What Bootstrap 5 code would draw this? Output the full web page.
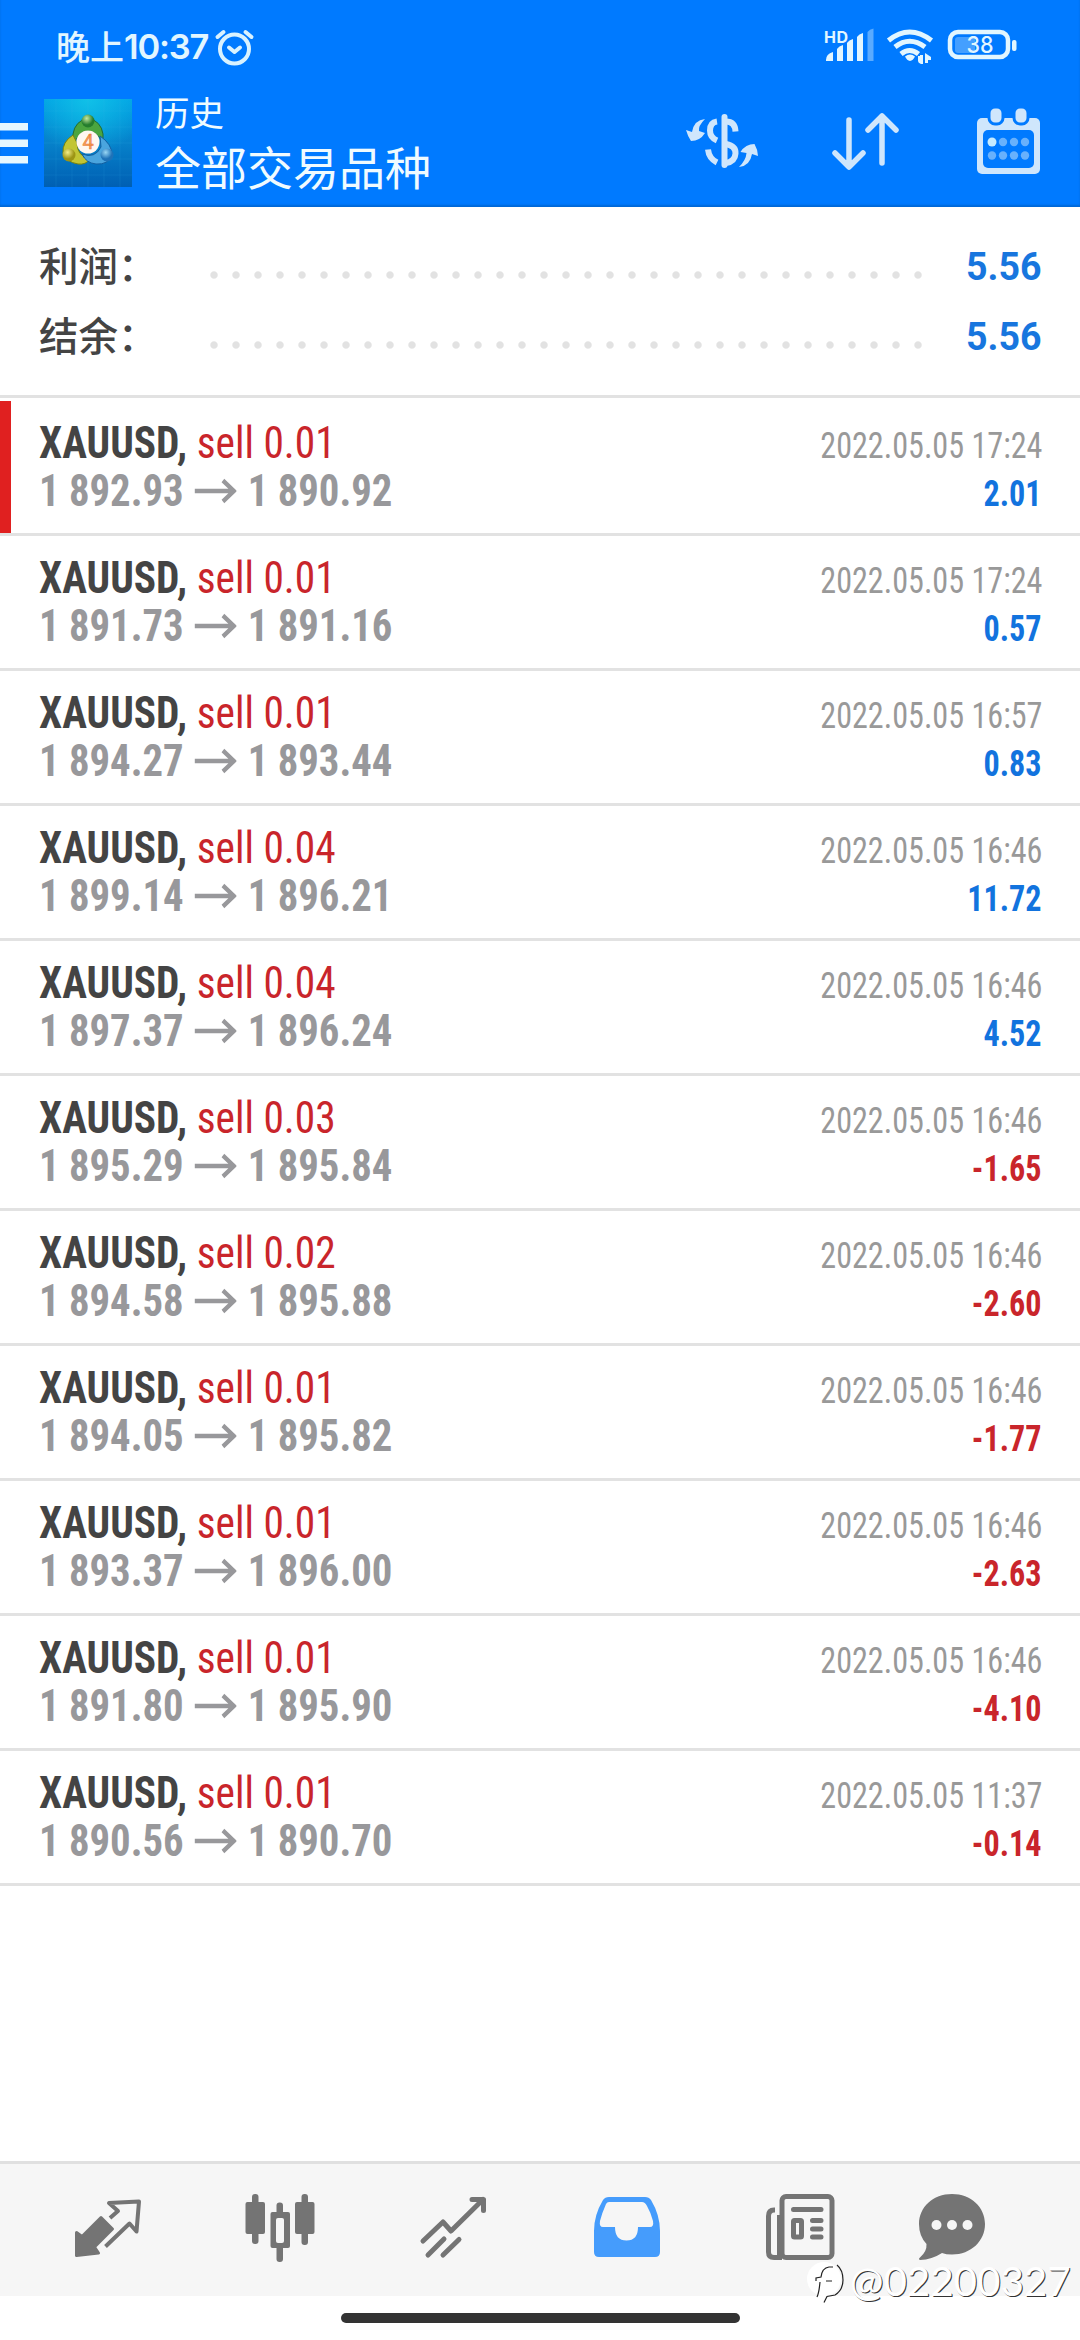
<!DOCTYPE html>
<html lang="zh-CN">
<head>
<meta charset="utf-8">
<meta name="viewport" content="width=device-width, initial-scale=1">
<title>历史</title>
<link href="https://cdn.jsdelivr.net/npm/bootstrap@5.3.0/dist/css/bootstrap.min.css" rel="stylesheet">
<style>
body{width:1080px;height:2340px;overflow:hidden;background:#fff;font-family:Roboto,"Noto Sans CJK SC",sans-serif;color:#444}
svg{display:block;flex:none}
.top-area{height:207px;background:#007aff;box-shadow:inset 0 -2px 2px #0068d6;color:#ecf9ff}
.status{height:94px;padding:1px 63px 0 56px}
.clock{font:600 34.5px/1 Inter,"Noto Sans CJK SC",sans-serif;letter-spacing:-1.2px;color:#e2f6ff}
.clock .cjk{font-size:34px;font-weight:500;letter-spacing:0}
.alarm{margin-left:6px}
.toolbar{height:113px;padding-right:40px}
.burger{margin-top:-14px}
.app-logo{margin:-16px 0 0 16px}
.titles{margin:-18px 0 0 23px;font-family:"Noto Sans CJK SC",sans-serif;color:#f0fbff}
.t-small{font-size:34.5px;line-height:46px}
.t-big{font-size:46px;line-height:62px}
.tool{margin-top:-20px}
.summary{height:191px;padding:25px 39px 0 39px;border-bottom:3px solid #e2e2e2}
.sum-line{height:70px}
.sum-label{flex:none;font:500 39.5px/70px "Noto Sans CJK SC",sans-serif;width:164px;margin-top:-6px}
.dots{flex:none;width:726px;height:10px;margin-top:15px;background:radial-gradient(circle at 50% 50%,#e2e2e2 3.2px,transparent 4.2px) 0 0/22px 10px repeat-x}
.sum-val{font-weight:700;font-size:39.5px;line-height:70px;color:#1876de;transform:scaleX(.95);transform-origin:right}
.deals{padding-top:3px}
.deal{height:135px;border-bottom:3px solid #e2e2e2;padding:18px 38px 0 39px;font-family:"Roboto Condensed",Roboto,sans-serif;line-height:48px;white-space:nowrap}
.deal.active-deal{box-shadow:inset 11px 0 0 #e02020}
.deal-l{font-size:44.5px}
.deal-l>div{transform:scaleX(.93);transform-origin:left}
.deal-r{font-size:36.5px;padding-top:3px;text-align:right;transform:scaleX(.88);transform-origin:right;color:#999}
.sym{font-weight:700;color:#444}
.sell{color:#c9252b}
.deal-l>.px{font-weight:700;color:#98989b;transform:scaleX(.915)}
.px svg{margin:0 12px 0 12px}
.gain,.loss{font-weight:700;font-size:36.5px;padding-right:1px}
.gain{color:#1273de}
.loss{color:#c9252b}
.tabs{height:135px;margin-top:275px;background:#f6f6f6;border-top:3px solid #e0e0e0;color:#747474}
.home{width:399px;height:10px;border-radius:5px;background:#333;margin:17px auto 0}
.wm{position:absolute;left:806px;top:2256px;color:#fff}
.wm span{font:400 40px/48px Lato,sans-serif;text-shadow:1px 1px 0 #333;letter-spacing:.2px}
</style>
<script src="https://cdn.jsdelivr.net/npm/bootstrap@5.3.0/dist/js/bootstrap.bundle.min.js"></script>
</head>
<body class="position-relative">
<header class="top-area">
  <div class="status d-flex align-items-center">
    <div class="clock d-flex align-items-center"><span class="cjk">晚上</span><span>10:37</span></div>
    <svg class="alarm" width="42" height="40" viewBox="0 0 42 40" fill="none" stroke="#d9f2ff" stroke-width="4" stroke-linecap="round" stroke-linejoin="round"><circle cx="20.500" cy="21" r="14.500"/><path d="M15 19.500l5.500 4.500 5.500-4.500M3.500 9l6-5M37.500 9l-6-5"/></svg>
    <svg class="ms-auto" width="193" height="40" viewBox="0 0 193 40" fill="#e2f6ff">
      <text x="0" y="15" font-family="Inter,sans-serif" font-size="16" font-weight="700" textLength="24">HD</text>
      <path d="M2 32q0-6 7-8v9H2zM13 21q2-3 6-4v16h-6zM23 15q2-3 6-4v22h-6zM33 9q2-3 6-4v28h-6z"/><path opacity=".4" d="M43.500 4q2-3 6-3.500V33h-6z"/>
      <g fill="none" stroke="#e2f6ff" stroke-width="5"><path d="M64.500 12.500q21-17 43 0M71 19q14.500-11.500 30 0M77 26q8.500-7 17.500 0"/></g>
      <path d="M81 28.500q5-4 10 0-2 4-5 4.500-3-.5-5-4.500zM94 28h2v-1h3v9h-2q-3-1-3-3zM101 25l6 4v3h-3v3h-3z"/>
      <rect x="126" y="4" width="58" height="25" rx="8" fill="none" stroke="#e2f6ff" stroke-width="4.500"/><rect x="131" y="9" width="20" height="16" rx="3" opacity=".3"/><rect x="188" y="12" width="4.500" height="11" rx="2"/>
      <text x="142.500" y="25" font-family="Inter,sans-serif" font-size="23" font-weight="500" textLength="27" lengthAdjust="spacingAndGlyphs">38</text>
    </svg>
  </div>
  <div class="toolbar d-flex align-items-center">
    <svg class="burger" width="28" height="41" viewBox="0 0 28 41" fill="#e6f7ff"><path d="M0 0h28v7.500H0zM0 16.500h28V24H0zM0 33h28v7.500H0z"/></svg>
    <svg class="app-logo" width="88" height="88" viewBox="0 0 88 88">
      <defs>
        <linearGradient id="sky" x2="0" y2="1"><stop offset="0" stop-color="#00a0e4"/><stop offset=".5" stop-color="#0681ca"/><stop offset="1" stop-color="#005fb3"/></linearGradient>
        <radialGradient id="glow" cx=".5" cy="0" r=".65"><stop stop-color="#12c4e8" stop-opacity=".9"/><stop offset="1" stop-color="#12c4e8" stop-opacity="0"/></radialGradient>
        <radialGradient id="gr" cx=".4" cy=".3"><stop stop-color="#c5e8a0"/><stop offset="1" stop-color="#257d2d"/></radialGradient>
        <radialGradient id="ye" cx=".4" cy=".3"><stop stop-color="#f4ee87"/><stop offset="1" stop-color="#9d9515"/></radialGradient>
        <radialGradient id="bl" cx=".4" cy=".3"><stop stop-color="#98d6f4"/><stop offset="1" stop-color="#1e72b8"/></radialGradient>
      </defs>
      <path fill="url(#sky)" d="M0 0h88v88H0z"/><path fill="url(#glow)" d="M0 0h88v88H0z"/>
      <path stroke="#49b7e8" stroke-opacity=".12" d="M12 0v88M28 0v88M44 0v88M60 0v88M76 0v88M0 12h88M0 28h88M0 44h88M0 60h88M0 76h88"/>
      <path d="M29 46V35q2-13 15-16 13 3 15 16v8q-7-11-15-11t-15 14z" fill="#4ba53f" stroke="#216b34"/>
      <path d="M29 36q-11 7-10 18 3 9 15 11 8 1 12-5-13-3-13-16z" fill="#c2c533" stroke="#79820c"/>
      <path d="M56 37q12 8 12 19-4 10-16 9-10-1-14-10 13 5 19-7z" fill="#4aa5de" stroke="#135e9f"/>
      <circle cx="44" cy="22" r="6.500" fill="url(#gr)"/><circle cx="25" cy="56" r="6.500" fill="url(#ye)"/><circle cx="63" cy="56" r="6.500" fill="url(#bl)"/>
      <circle cx="44" cy="43" r="11.500" fill="#fff7f0"/>
      <text x="44" y="50" text-anchor="middle" font-family="Roboto,sans-serif" font-size="20" fill="#f5a05a" stroke="#e97a35" stroke-width=".5">4</text>
    </svg>
    <div class="titles"><div class="t-small">历史</div><div class="t-big">全部交易品种</div></div>
    <svg class="tool ms-auto" width="72" height="58" viewBox="0 0 72 58">
      <g fill="none" stroke="#cfe6fc" stroke-width="6"><path stroke-linecap="round" d="M38.500 5v48"/><path d="M31 9.500q-7 1-7 9 0 7 7 10M22 37.500q1 9 9 13"/><path d="M40 9.500q9 0 9.500 10M40 32q10 2 9.500 9.500-.5 8-9.500 9.500"/></g>
      <path fill="#cfe6fc" d="M19 7q-7 7-6 12l6 2q-5 8-14 8Q2 25 0 18l6 2Q8 8 19 7zM53 55q7-7 7.500-14l-6-1q5-8 14-8 3 5 3.500 12l-6-2Q64 54 53 55z"/>
    </svg>
    <svg class="tool" style="margin-left:74px" width="67" height="60" viewBox="0 0 67 60" fill="none" stroke="#cfe6fc" stroke-width="5.500" stroke-linecap="round" stroke-linejoin="round"><path d="M17 9v45M3 42l14 14 14-14M50 52V5M36 19L50 5l14 14"/></svg>
    <svg class="tool" style="margin-left:78px" width="63" height="66" viewBox="0 0 63 66">
      <rect y="10" width="63" height="56" rx="5" fill="#cfe6fc"/><rect x="6" y="22" width="51" height="38" rx="5" fill="#007aff"/>
      <g fill="#cfe6fc" stroke="#007aff" stroke-width="3"><path d="M12.500-2h13v12q0 6-6.500 6t-6.500-6zM37.500-2h13v12q0 6-6.500 6t-6.500-6z" stroke="none" fill="#007aff"/><rect x="12" y="-1" width="14" height="17" rx="6"/><rect x="37" y="-1" width="14" height="17" rx="6"/></g>
      <g fill="#68b1fc"><circle cx="26" cy="34" r="4.200"/><circle cx="37" cy="34" r="4.200"/><circle cx="48" cy="34" r="4.200"/><circle cx="15" cy="47.500" r="4.200"/><circle cx="26" cy="47.500" r="4.200"/><circle cx="37" cy="47.500" r="4.200"/><circle cx="48" cy="47.500" r="4.200"/></g><circle cx="15" cy="34" r="4.500" fill="#c6ebff"/>
    </svg>
  </div>
</header>

<section class="summary">
  <div class="sum-line d-flex align-items-center"><div class="sum-label">利润：</div><div class="dots"></div><div class="sum-val ms-auto">5.56</div></div>
  <div class="sum-line d-flex align-items-center"><div class="sum-label">结余：</div><div class="dots"></div><div class="sum-val ms-auto">5.56</div></div>
</section>

<svg class="d-none"><symbol id="arr" viewBox="0 0 46 26"><path d="M0 13h43M31 2.500L43 13 31 23.500" fill="none" stroke="#98989b" stroke-width="4.500"/></symbol></svg>

<main class="deals">
  <div class="deal active-deal d-flex justify-content-between">
    <div class="deal-l"><div><span class="sym">XAUUSD,</span> <span class="sell">sell 0.01</span></div><div class="px d-flex align-items-center">1 892.93<svg width="46" height="26"><use href="#arr"/></svg>1 890.92</div></div>
    <div class="deal-r"><div>2022.05.05 17:24</div><div class="gain">2.01</div></div>
  </div>
  <div class="deal d-flex justify-content-between">
    <div class="deal-l"><div><span class="sym">XAUUSD,</span> <span class="sell">sell 0.01</span></div><div class="px d-flex align-items-center">1 891.73<svg width="46" height="26"><use href="#arr"/></svg>1 891.16</div></div>
    <div class="deal-r"><div>2022.05.05 17:24</div><div class="gain">0.57</div></div>
  </div>
  <div class="deal d-flex justify-content-between">
    <div class="deal-l"><div><span class="sym">XAUUSD,</span> <span class="sell">sell 0.01</span></div><div class="px d-flex align-items-center">1 894.27<svg width="46" height="26"><use href="#arr"/></svg>1 893.44</div></div>
    <div class="deal-r"><div>2022.05.05 16:57</div><div class="gain">0.83</div></div>
  </div>
  <div class="deal d-flex justify-content-between">
    <div class="deal-l"><div><span class="sym">XAUUSD,</span> <span class="sell">sell 0.04</span></div><div class="px d-flex align-items-center">1 899.14<svg width="46" height="26"><use href="#arr"/></svg>1 896.21</div></div>
    <div class="deal-r"><div>2022.05.05 16:46</div><div class="gain">11.72</div></div>
  </div>
  <div class="deal d-flex justify-content-between">
    <div class="deal-l"><div><span class="sym">XAUUSD,</span> <span class="sell">sell 0.04</span></div><div class="px d-flex align-items-center">1 897.37<svg width="46" height="26"><use href="#arr"/></svg>1 896.24</div></div>
    <div class="deal-r"><div>2022.05.05 16:46</div><div class="gain">4.52</div></div>
  </div>
  <div class="deal d-flex justify-content-between">
    <div class="deal-l"><div><span class="sym">XAUUSD,</span> <span class="sell">sell 0.03</span></div><div class="px d-flex align-items-center">1 895.29<svg width="46" height="26"><use href="#arr"/></svg>1 895.84</div></div>
    <div class="deal-r"><div>2022.05.05 16:46</div><div class="loss">-1.65</div></div>
  </div>
  <div class="deal d-flex justify-content-between">
    <div class="deal-l"><div><span class="sym">XAUUSD,</span> <span class="sell">sell 0.02</span></div><div class="px d-flex align-items-center">1 894.58<svg width="46" height="26"><use href="#arr"/></svg>1 895.88</div></div>
    <div class="deal-r"><div>2022.05.05 16:46</div><div class="loss">-2.60</div></div>
  </div>
  <div class="deal d-flex justify-content-between">
    <div class="deal-l"><div><span class="sym">XAUUSD,</span> <span class="sell">sell 0.01</span></div><div class="px d-flex align-items-center">1 894.05<svg width="46" height="26"><use href="#arr"/></svg>1 895.82</div></div>
    <div class="deal-r"><div>2022.05.05 16:46</div><div class="loss">-1.77</div></div>
  </div>
  <div class="deal d-flex justify-content-between">
    <div class="deal-l"><div><span class="sym">XAUUSD,</span> <span class="sell">sell 0.01</span></div><div class="px d-flex align-items-center">1 893.37<svg width="46" height="26"><use href="#arr"/></svg>1 896.00</div></div>
    <div class="deal-r"><div>2022.05.05 16:46</div><div class="loss">-2.63</div></div>
  </div>
  <div class="deal d-flex justify-content-between">
    <div class="deal-l"><div><span class="sym">XAUUSD,</span> <span class="sell">sell 0.01</span></div><div class="px d-flex align-items-center">1 891.80<svg width="46" height="26"><use href="#arr"/></svg>1 895.90</div></div>
    <div class="deal-r"><div>2022.05.05 16:46</div><div class="loss">-4.10</div></div>
  </div>
  <div class="deal d-flex justify-content-between">
    <div class="deal-l"><div><span class="sym">XAUUSD,</span> <span class="sell">sell 0.01</span></div><div class="px d-flex align-items-center">1 890.56<svg width="46" height="26"><use href="#arr"/></svg>1 890.70</div></div>
    <div class="deal-r"><div>2022.05.05 11:37</div><div class="loss">-0.14</div></div>
  </div>
</main>

<nav class="tabs d-flex justify-content-center">
  <svg width="173" height="132" viewBox="22 2164 173 132">
    <path fill="#747474" stroke="#747474" stroke-width="3" stroke-linejoin="round" d="M102 2217.500l11.500 11.500-18 18 4 6-22 2.500v-23l5.500 4z"/>
    <path fill="none" stroke="#747474" stroke-width="4" stroke-linejoin="round" d="M111 2218l8-7-9-8 30-1.500-2.500 30-7-8-24 23"/>
  </svg>
  <svg width="173" height="132" viewBox="195 2164 173 132" fill="#747474">
    <rect x="253" y="2194" width="6.500" height="50" rx="3"/><rect x="246.500" y="2202" width="19.500" height="32" rx="2"/>
    <rect x="302.500" y="2194" width="6.500" height="51" rx="3"/><rect x="296" y="2202" width="19.500" height="32" rx="2"/>
    <rect x="277.500" y="2202.500" width="6.500" height="59.500" rx="3"/><rect x="271.500" y="2212" width="19.500" height="36" rx="2"/><rect x="277" y="2218" width="8" height="25" rx="2" fill="#f6f6f6"/>
  </svg>
  <svg width="173" height="132" viewBox="368 2164 173 132" fill="none" stroke="#747474" stroke-width="5" stroke-linecap="round" stroke-linejoin="round">
    <path d="M424 2241l20-19 8 9 32-31.500M473 2199.500h11.500v11M429 2255l16-16M444 2255l16-15.500"/>
  </svg>
  <svg width="173" height="132" viewBox="541 2164 173 132">
    <path fill="#459cfc" fill-rule="evenodd" d="M610 2197h36q4 0 6 3 9 15 9 31v21q0 5-5 5h-56q-5 0-5-5v-21q0-16 9-31 2-3 6-3zM610 2202q-2 0-3 2-4 9-6 17-1 6 3 6h12q0 13.500 11.500 13.500T639 2227h12q4 0 3-6-2-8-6-15-2-4-5-4z"/>
  </svg>
  <svg width="173" height="132" viewBox="714 2164 173 132" fill="none" stroke="#747474" stroke-width="5">
    <rect x="783" y="2196.500" width="50" height="61" rx="4"/><path d="M776 2210h-1q-5.500 0-5.500 6v36q0 5.500 5.500 5.500h8"/><path d="M780.500 2215v40"/>
    <path stroke-linecap="round" d="M794.500 2209.500h27.500M813.500 2220.500h8.500M813.500 2229h8.500M813.500 2237h8.500"/><rect x="794.500" y="2220.500" width="8" height="16.500" rx="1"/>
  </svg>
  <svg width="173" height="132" viewBox="887 2164 173 132">
    <path fill="#747474" d="M953 2194c19 0 33 13 33 30s-14 30.500-33 30.500q-6 0-10-1.500-10 6.500-22 7-2-1 0-2.500 7-6 6.500-13.500-7.500-8-7.500-20c0-17 14-30 33-30z"/><g fill="#f6f6f6"><circle cx="937.500" cy="2225" r="5"/><circle cx="953" cy="2225" r="5"/><circle cx="968.500" cy="2225" r="5"/></g>
  </svg>
</nav>
<div class="home"></div>

<div class="wm d-flex align-items-center">
  <svg width="44" height="50" viewBox="0 0 44 50" fill="none"><circle cx="18" cy="23" r="17" fill="#fff"/><path fill="#fff" d="M26 12q12 8 4 24l-10 4z"/><path stroke="#222" stroke-width="1.200" d="M10 25v-3l5-1q1-9 8-10h4M14 26q-1 11-3 15M20 25h6M31 9q6 5 6 15t-8 15l-8 1.500-3 6"/></svg>
  <span>@02200327</span>
</div>
</body>
</html>
